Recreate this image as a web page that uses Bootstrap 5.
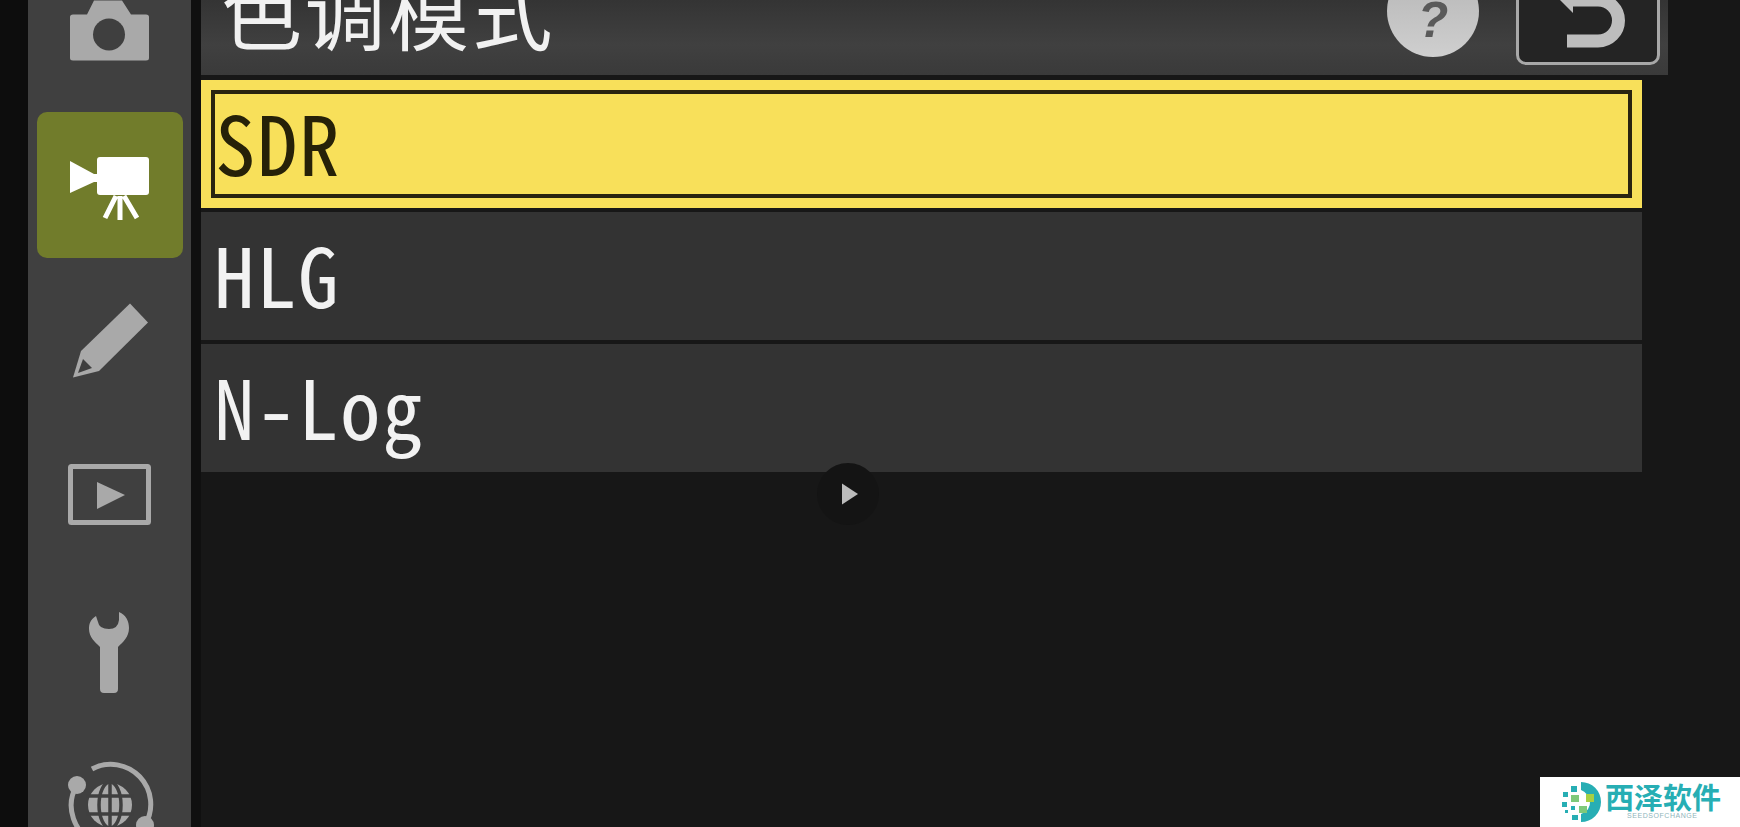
<!DOCTYPE html>
<html lang="zh">
<head>
  <meta charset="UTF-8" />
  <meta name="viewport" content="width=device-width, initial-scale=1.0"/>
  <title>色调模式</title>
  <link href="https://cdn.jsdelivr.net/npm/bootstrap@5.3.0/dist/css/bootstrap.min.css" rel="stylesheet"/>
  <style>
    body { background: #171717; font-family: "Noto Sans CJK SC", "Noto Sans", sans-serif; }
    .cam-screen { height: 827px; background: #171717; }
    .cam-gutter { width: 28px; background: #0d0d0d; }
    .cam-side { width: 163px; background: #404040; padding-left: 9px; }
    .cam-side-list { margin-top: -43.5px; gap: 9.5px; }
    .cam-tile { width: 146px; height: 146px; flex: none; border-radius: 10px; }
    .cam-tile svg { display: block; }
    .cam-tile-on { background: #717c2b; }
    .cam-gap { width: 10px; background: #101010; }
    .cam-main { width: 1467px; }
    .cam-head { height: 75px; background: linear-gradient(#343434, #404040 60%, #3a3a3a); }
    .cam-title { font-size: 81px; line-height: 1; color: #f1f1f1; margin: -32px 0 0 20px; letter-spacing: 2.5px; white-space: nowrap; }
    .cam-help { width: 92px; height: 92px; margin-top: -35px; margin-right: 37px; padding-bottom: 12px; background: linear-gradient(#b4b4b4, #cfcfcf); font: italic 700 50px/1 "Liberation Sans", sans-serif; color: #5a5a5a; }
    .cam-back { width: 144px; height: 100px; margin-top: -35px; margin-right: 8px; background: #242424; border: 3px solid #a8a8a8; border-radius: 10px; overflow: hidden; }
    .cam-back svg { display: block; margin: -3px; }
    .cam-list { width: 1441px; margin-top: 5px; gap: 4px; }
    .cam-row { height: 128px; background: #333; color: #f2f2f2; padding: 0 0 7px 13px; font-size: 81px; line-height: 1; letter-spacing: 1.5px; font-feature-settings: "hwid"; }
    .cam-row-on { background: #f8e05a; color: #262108; padding: 10px; }
    .cam-row-in { height: 108px; border: 4px solid #2a2410; padding-bottom: 7px; }
    .cam-play { left: 817px; top: 463px; width: 62px; height: 62px; padding-left: 3px; background: #141414; }
    .cam-mark { right: 0; bottom: 0; width: 200px; height: 50px; background: #fff; color: #27aeb4; }
    .cam-mark-name { font-size: 29px; line-height: 1; font-weight: 700; margin: 5px 0 0 3px; white-space: nowrap; }
    .cam-mark-sub { font: 7px/1 "Liberation Sans", sans-serif; letter-spacing: .55px; color: #8fb5bb; margin: 1px 0 0 25px; white-space: nowrap; }
  </style>
</head>
<body>
  <div class="cam-screen d-flex position-relative overflow-hidden">
    <div class="cam-gutter flex-shrink-0"></div>

    <nav class="cam-side flex-shrink-0 overflow-hidden">
      <div class="cam-side-list d-flex flex-column">
        <div class="cam-tile">
          <svg width="146" height="146" viewBox="0 0 146 146" fill="#a9a9a9">
            <path d="M33 60 Q33 57.500 36 57.500 H50 L57 43.500 H85 L94 57.500 H109 Q112 57.500 112 60 V101 Q112 103.500 109 103.500 H36 Q33 103.500 33 101 Z"/>
            <circle cx="72" cy="77.500" r="16" fill="#3f3f3f"/>
          </svg>
        </div>
        <div class="cam-tile cam-tile-on">
          <svg width="146" height="146" viewBox="0 0 146 146" fill="#fff">
            <path d="M33 49 L57 62 H62 V70 H57 L33 81 Z"/>
            <rect x="60" y="45" width="52" height="38" rx="3"/>
            <path d="M79 84 L68 106 M83 84 V108 M87 84 L100 106" stroke="#fff" stroke-width="5" fill="none"/>
          </svg>
        </div>
        <div class="cam-tile">
          <svg width="146" height="146" viewBox="0 0 146 146" fill="#a9a9a9">
            <path d="M93 35.500 L111 54.500 L62 103 L36 109.500 L44 83 Z"/>
            <path d="M41 105 L46 91 L55 100 Z" fill="#3f3f3f"/>
          </svg>
        </div>
        <div class="cam-tile">
          <svg width="146" height="146" viewBox="0 0 146 146" fill="#a9a9a9">
            <rect x="33.500" y="43.500" width="78" height="56" rx="1" fill="none" stroke="#a9a9a9" stroke-width="5"/>
            <path d="M60 59 V86 L88 72 Z"/>
          </svg>
        </div>
        <div class="cam-tile">
          <svg width="146" height="146" viewBox="0 0 146 146" fill="#a9a9a9">
            <path d="M59 37 C53 41 52 45 52 50 C52 58 58 63 63 68 V110 Q63 114 67 114 H77 Q81 114 81 110 V68 C86 63 92 58 92 49 C92 42 89 36 82 33 V41 Q81 50 72 50 Q62 50 61 43 Z"/>
          </svg>
        </div>
        <div class="cam-tile">
          <svg width="146" height="146" viewBox="0 0 146 146" fill="#a9a9a9">
            <path d="M55 35 A40 40 0 0 1 108 91" fill="none" stroke="#a9a9a9" stroke-width="5"/>
            <path d="M40 51 A40 40 0 0 0 60 109" fill="none" stroke="#a9a9a9" stroke-width="5"/>
            <circle cx="40" cy="51" r="9"/>
            <circle cx="108" cy="91" r="9"/>
            <circle cx="73" cy="71" r="22"/>
            <path d="M49 62 H97 M49 80 H97 M73 47 V95" stroke="#3f3f3f" stroke-width="3.500" fill="none"/>
            <ellipse cx="73" cy="71" rx="11" ry="23" fill="none" stroke="#3f3f3f" stroke-width="3.500"/>
          </svg>
        </div>
      </div>
    </nav>

    <div class="cam-gap flex-shrink-0"></div>

    <main class="cam-main flex-shrink-0">
      <header class="cam-head d-flex align-items-start justify-content-between overflow-hidden">
        <div class="cam-title">色调模式</div>
        <div class="d-flex align-items-start">
          <div class="cam-help rounded-circle d-flex align-items-end justify-content-center">?</div>
          <div class="cam-back">
            <svg width="144" height="100" viewBox="0 0 144 100" fill="#bdbdbd">
              <path d="M51 76 H82 A20.500 20.500 0 0 0 82 35 H55" fill="none" stroke="#bdbdbd" stroke-width="13"/>
              <path d="M57 48 V5 L36 27 Z"/>
            </svg>
          </div>
        </div>
      </header>

      <div class="cam-list list-group rounded-0">
        <div class="cam-row cam-row-on list-group-item border-0 rounded-0">
          <div class="cam-row-in d-flex align-items-center">SDR</div>
        </div>
        <div class="cam-row list-group-item border-0 rounded-0 d-flex align-items-center">HLG</div>
        <div class="cam-row list-group-item border-0 rounded-0 d-flex align-items-center">N-Log</div>
      </div>
    </main>

    <div class="cam-play position-absolute rounded-circle d-flex align-items-center justify-content-center">
      <svg width="20" height="24" viewBox="0 0 20 24" fill="#bcbcbc"><path d="M2 1.500 L18 12 L2 22.500 Z"/></svg>
    </div>

    <div class="cam-mark position-absolute d-flex">
      <svg class="flex-shrink-0" width="48" height="50" viewBox="0 0 48 50" style="margin-left:14px">
        <path d="M27 5 A20 20 0 0 1 27 45 V37 A12 12 0 0 0 36 24 Q34 16 27 13 Z" fill="#27aeb4"/>
        <rect x="17" y="9" width="6" height="6" fill="#27aeb4"/>
        <rect x="9" y="15" width="5" height="5" fill="#27aeb4"/>
        <rect x="17" y="18" width="8" height="7" fill="#7fc97a"/>
        <rect x="32" y="17" width="8" height="8" fill="#a6d043"/>
        <rect x="25" y="29" width="8" height="7" fill="#7fc97a"/>
        <rect x="8" y="25" width="5" height="5" fill="#27aeb4"/>
        <rect x="17" y="29" width="4" height="4" fill="#27aeb4"/>
        <rect x="18" y="38" width="6" height="5" fill="#27aeb4"/>
        <rect x="11" y="33" width="3" height="3" fill="#27aeb4"/>
      </svg>
      <div>
        <div class="cam-mark-name">西泽软件</div>
        <div class="cam-mark-sub">SEEDSOFCHANGE</div>
      </div>
    </div>
  </div>

  <script src="https://cdn.jsdelivr.net/npm/bootstrap@5.3.0/dist/js/bootstrap.bundle.min.js"></script>
</body>
</html>
